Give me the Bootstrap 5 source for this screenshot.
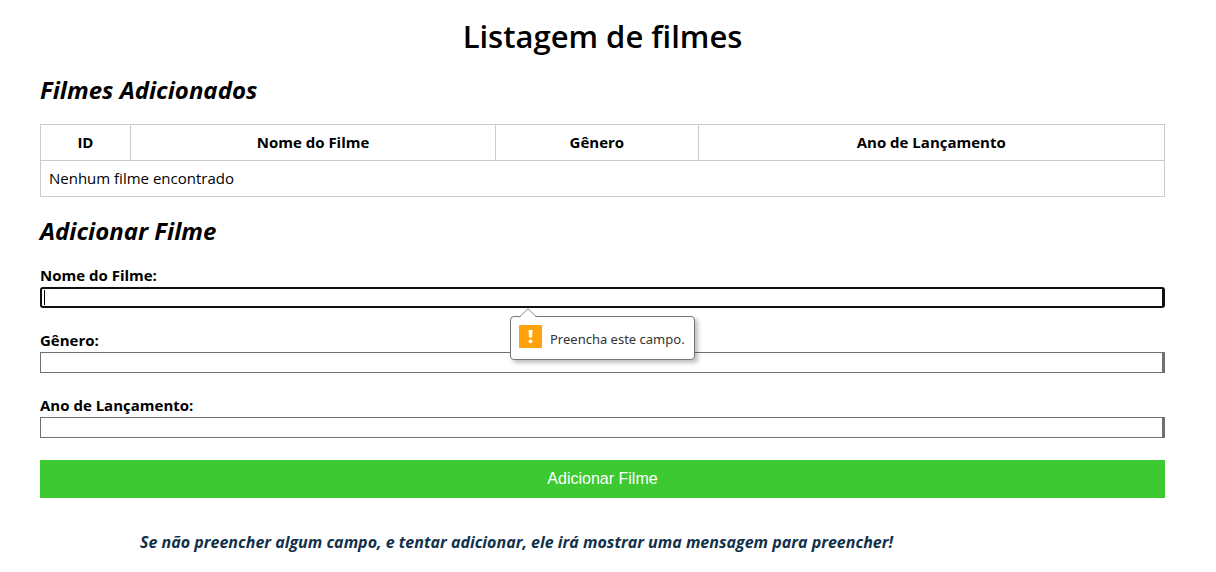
<!DOCTYPE html>
<html lang="pt-BR">
<head>
<meta charset="utf-8">
<meta name="viewport" content="width=device-width, initial-scale=1">
<title>Listagem de filmes</title>
<link href="https://cdn.jsdelivr.net/npm/bootstrap@5.3.0/dist/css/bootstrap.min.css" rel="stylesheet">
<style>
  body { font-family: "Trebuchet MS", "Open Sans", "Noto Sans", sans-serif; font-size: 15px; line-height: 20px; color: #000; background: #fff; }
  main { padding: 16px 51px 0 40px; }
  h1 { font-size: 31px; line-height: 40px; font-weight: 600; }
  h2 { font-size: 24px; line-height: 30px; font-weight: 700; font-style: italic; margin: 19px 0; }
  .films { --bs-table-color: #000; --bs-table-bg: transparent; border-color: #ccc; table-layout: fixed; }
  .films th, .films td { padding: 8px; line-height: 19px; border: 1px solid #ccc; }
  .films th, .field label { font-weight: 700; }
  .col-id { width: 8%; }
  .col-name { width: 32.5%; }
  .col-genre { width: 18%; }
  .field { margin-bottom: 22px; }
  .field label { height: 22px; }
  .field input { height: 21px; padding: 1px 3px; border: 1px solid #6f6f6f; border-right-width: 3px; outline: 0; caret-color: transparent; }
  .field input.is-current { border: 2px solid #101010; border-right-width: 3px; border-radius: 3px; }
  .caret { left: 4px; top: 3px; width: 1px; height: 15px; background: #000; }
  .hint { top: 29px; left: 470px; width: 185px; height: 44px; padding: 0 8px; gap: 8px; font-family: "Noto Sans", sans-serif; font-size: 13px; color: #333; background: #fff; border: 1px solid #767676; border-radius: 4px; box-shadow: 3px 3px 4px rgba(0,0,0,.25); z-index: 2; }
  .hint-tip { left: 8px; top: -9px; }
  .hint-text { white-space: nowrap; padding-top: 2px; }
  .send { height: 38px; font-family: "Liberation Sans", sans-serif; font-size: 16px; color: #fff; background: #3cc931; }
  .note { margin: 34px 0 0 100px; font-size: 16px; font-weight: 700; font-style: italic; color: #12314a; }
</style>
</head>
<body>
<main>
  <h1 class="text-center mb-0">Listagem de filmes</h1>
  <h2>Filmes Adicionados</h2>
  <table class="films table mb-0">
    <thead>
      <tr class="text-center">
        <th scope="col" class="col-id">ID</th>
        <th scope="col" class="col-name">Nome do Filme</th>
        <th scope="col" class="col-genre">Gênero</th>
        <th scope="col">Ano de Lançamento</th>
      </tr>
    </thead>
    <tbody>
      <tr><td colspan="4">Nenhum filme encontrado</td></tr>
    </tbody>
  </table>
  <h2>Adicionar Filme</h2>
  <form novalidate>
    <div class="field">
      <label class="d-block" for="nome">Nome do Filme:</label>
      <div class="position-relative">
        <input class="is-current d-block w-100" type="text" id="nome" aria-describedby="hint">
        <span class="caret position-absolute"></span>
        <div class="hint position-absolute d-flex align-items-center" id="hint" role="alert">
          <svg class="hint-tip position-absolute" width="18" height="10" viewBox="0 0 18 10" aria-hidden="true"><path d="M0 10 L9 1 L18 10" fill="#fff"/><path d="M0 9 L1 8.500 L9 .7 L17 8.500 L18 9" fill="none" stroke="#888"/></svg>
          <svg class="flex-shrink-0 mb-1" width="23" height="23" viewBox="0 0 23 23" aria-hidden="true"><rect width="23" height="23" rx="1" fill="#ffa20d"/><path d="M9.500 5h4l-.5 7.500h-3z" fill="#fff"/><circle cx="11.500" cy="16.300" r="1.900" fill="#fff"/></svg>
          <span class="hint-text">Preencha este campo.</span>
        </div>
      </div>
    </div>
    <div class="field">
      <label class="d-block" for="genero">Gênero:</label>
      <input class="d-block w-100" type="text" id="genero">
    </div>
    <div class="field">
      <label class="d-block" for="ano">Ano de Lançamento:</label>
      <input class="d-block w-100" type="text" id="ano">
    </div>
    <button class="send d-block w-100 border-0" type="submit">Adicionar Filme</button>
  </form>
  <p class="note">Se não preencher algum campo, e tentar adicionar, ele irá mostrar uma mensagem para preencher!</p>
</main>
<script src="https://cdn.jsdelivr.net/npm/bootstrap@5.3.0/dist/js/bootstrap.bundle.min.js"></script>
</body>
</html>
